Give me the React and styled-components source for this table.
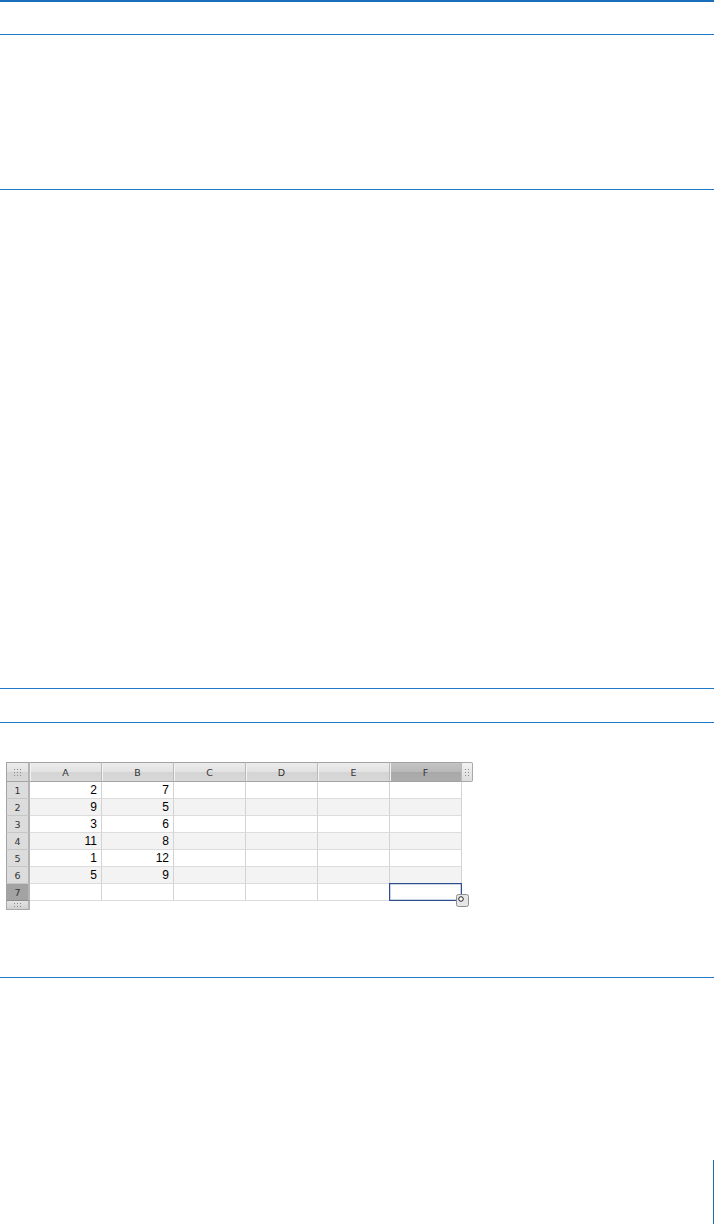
import React from 'react'
import styled, { createGlobalStyle } from 'styled-components'

const GlobalStyle = createGlobalStyle`
  html, body {
    margin: 0;
    padding: 0;
    background: #fff;
  }
  * {
    box-sizing: border-box;
  }
`

const blue = '#1f78c8'

const Page = styled.div`
  width: 714px;
  height: 1224px;
  display: flex;
  flex-direction: column;
  overflow: hidden;
`

const Band = styled.section`
  height: ${(p) => p.$h}px;
  flex: none;
  border-top: ${(p) => (p.$thick ? 2 : 1)}px solid ${(p) => (p.$thick ? '#1a6fbd' : blue)};
`

const TableBand = styled(Band)`
  padding: 39px 0 0 6px;
`

const EdgeBand = styled(Band)`
  flex: 1;
  display: flex;
  justify-content: flex-end;
  align-items: flex-end;
`

const EdgeMark = styled.div`
  width: 1px;
  height: 64px;
  background: #1f6cb0;
`

const Grid = styled.div`
  display: grid;
  grid-template-columns: 24px repeat(6, 72px) 11px;
  grid-template-rows: 20px repeat(7, 17px) 9px;
  width: max-content;
  font-family: 'DejaVu Sans', 'Liberation Sans', sans-serif;
`

const headBg = 'linear-gradient(#ececec 0%, #e2e2e2 50%, #d4d4d4 51%, #d8d8d8 100%)'
const headActiveBg = 'linear-gradient(#c4c4c4 0%, #b8b8b8 50%, #a8a8a8 51%, #adadad 100%)'

const Dots = styled.span`
  width: ${(p) => p.$w}px;
  height: ${(p) => p.$h}px;
  background: radial-gradient(circle, #8a8a8a 0.6px, transparent 0.9px) 0 0 / 3px 3px;
`

const Corner = styled.div`
  background: ${headBg};
  border: 1px solid #a3a3a3;
  border-right: 2px solid #b4b4b4;
  display: flex;
  align-items: center;
  justify-content: center;
`

const ColHead = styled.div`
  background: ${(p) => (p.$active ? headActiveBg : headBg)};
  border-top: 1px solid #a3a3a3;
  border-bottom: 1px solid #a3a3a3;
  border-right: 1px solid #b9b9b9;
  box-shadow: inset 1px 0 0 #f4f4f4;
  font-size: 9.5px;
  color: #333;
  display: flex;
  align-items: center;
  justify-content: center;
`

const HeadGrip = styled.div`
  background: linear-gradient(#f2f2f2, #dcdcdc);
  border: 1px solid #a8a8a8;
  border-left: none;
  border-radius: 0 2px 2px 0;
  display: flex;
  align-items: center;
  justify-content: center;
`

const RowHead = styled.div`
  background: ${(p) => (p.$active ? '#a3a3a3' : '#dcdcdc')};
  border-left: 1px solid #a3a3a3;
  border-right: 2px solid #b4b4b4;
  border-bottom: 1px solid ${(p) => (p.$active ? '#8c8c8c' : '#c6c6c6')};
  font-size: 9.5px;
  color: #333;
  display: flex;
  align-items: center;
  justify-content: center;
`

const FootGrip = styled.div`
  background: linear-gradient(#e4e4e4, #d0d0d0);
  border: 1px solid #a8a8a8;
  border-top: none;
  border-right: 2px solid #b4b4b4;
  display: flex;
  align-items: center;
  justify-content: center;
`

const Cell = styled.div`
  position: relative;
  background: ${(p) => (p.$alt ? '#f3f3f3' : '#fff')};
  border-right: 1px solid #d3d3d3;
  border-bottom: 1px solid #dcdcdc;
  font-family: 'Liberation Sans', Arial, sans-serif;
  font-size: 12px;
  line-height: 16px;
  color: #000;
  text-align: right;
  padding-right: 4px;
`

const Selection = styled.div`
  position: absolute;
  top: -1px;
  left: -1px;
  right: -1px;
  bottom: -1px;
  border: 1px solid #2e4f8e;
  box-shadow: inset 0 0 0 0.5px rgba(46, 79, 142, 0.5);
`

const Handle = styled.svg`
  position: absolute;
  right: -9px;
  bottom: -8px;
`

const Blank = styled.div``

const columns = ['A', 'B', 'C', 'D', 'E', 'F']
const rows = [
  [2, 7],
  [9, 5],
  [3, 6],
  [11, 8],
  [1, 12],
  [5, 9],
  [],
]

const Sheet = () => (
  <Grid>
    <Corner>
      <Dots $w={9} $h={9} />
    </Corner>
    {columns.map((c) => (
      <ColHead key={c} $active={c === 'F'}>
        {c}
      </ColHead>
    ))}
    <HeadGrip>
      <Dots $w={6} $h={9} />
    </HeadGrip>

    {rows.map((vals, r) => (
      <React.Fragment key={r}>
        <RowHead $active={r === 6}>{r + 1}</RowHead>
        {columns.map((c, i) => {
          const selected = r === 6 && c === 'F'
          return (
            <Cell key={c} $alt={r % 2 === 1}>
              {vals[i]}
              {selected && (
                <>
                  <Selection />
                  <Handle width='15' height='15' viewBox='0 0 15 15'>
                    <rect x='1.5' y='1.5' width='12' height='12' rx='2' fill='#e6e6e6' stroke='#8d8d8d' />
                    <circle cx='6' cy='6' r='2.3' fill='#fff' stroke='#222' strokeWidth='1' />
                  </Handle>
                </>
              )}
            </Cell>
          )
        })}
        <Blank />
      </React.Fragment>
    ))}

    <FootGrip>
      <Dots $w={9} $h={6} />
    </FootGrip>
  </Grid>
)

const App = () => {
  return (
    <Page>
      <GlobalStyle />
      <Band $thick $h={34} />
      <Band $h={155} />
      <Band $h={499} />
      <Band $h={34} />
      <TableBand $h={255}>
        <Sheet />
      </TableBand>
      <EdgeBand>
        <EdgeMark />
      </EdgeBand>
    </Page>
  )
}

export default App
